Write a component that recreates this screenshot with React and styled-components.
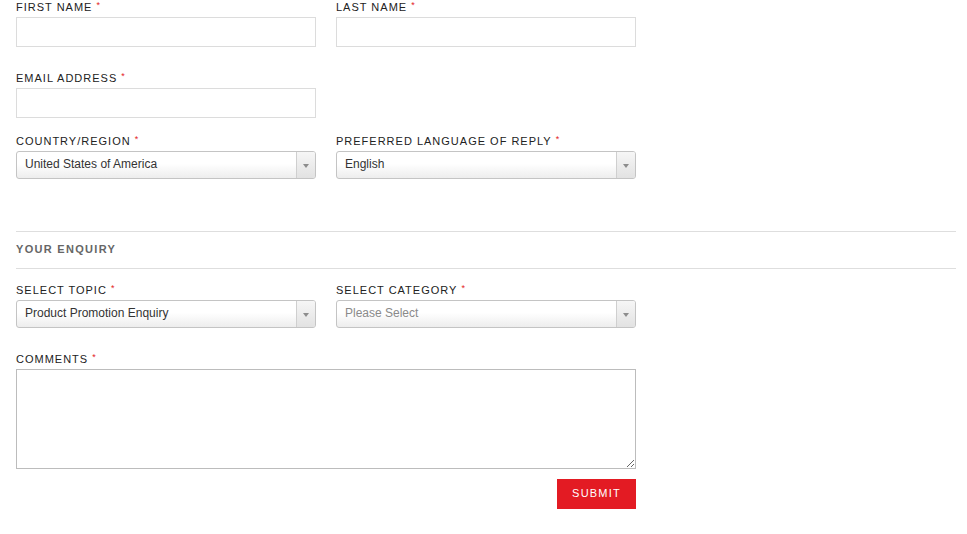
import React from "react";
import styled, { createGlobalStyle } from "styled-components";

const GlobalStyle = createGlobalStyle`
  body {
    margin: 0;
    background: #fff;
    font-family: "Liberation Sans", Arial, sans-serif;
  }
`;

const Form = styled.form`
  width: 940px;
  padding-left: 16px;
`;

const Row = styled.div`
  display: grid;
  grid-template-columns: 300px 300px;
  column-gap: 20px;
  margin-bottom: ${props => props.gap || 0}px;
`;

const Field = styled.div`
  display: flex;
  flex-direction: column;
`;

const Label = styled.label`
  display: block;
  height: 14px;
  line-height: 14px;
  margin-bottom: 3px;
  font-size: 11px;
  letter-spacing: 1px;
  color: #222;
  text-transform: uppercase;
`;

const Required = styled.span`
  color: #e31b23;
  font-size: 9px;
  vertical-align: top;
  line-height: 10px;
  margin-left: 4px;
`;

const TextInput = styled.input`
  box-sizing: border-box;
  width: 100%;
  height: 30px;
  border: 1px solid #dcdcdc;
  margin: 0;
  padding: 0 8px;
  font-family: inherit;
  font-size: 12px;
  outline: none;
`;

const SelectBox = styled.div`
  box-sizing: border-box;
  display: flex;
  align-items: stretch;
  height: 28px;
  border: 1px solid #c4c4c4;
  border-radius: 3px;
  background: linear-gradient(#ffffff, #ffffff 45%, #ededed);
  overflow: hidden;
`;

const SelectValue = styled.span`
  flex: 1;
  display: flex;
  align-items: center;
  padding: 0 0 2px 8px;
  font-size: 12px;
  color: ${props => (props.placeholder ? "#8a8a8a" : "#333")};
`;

const SelectArrow = styled.span`
  width: 18px;
  border-left: 1px solid #cfcfcf;
  background: linear-gradient(#f6f6f6, #e2e2e2);
  display: flex;
  align-items: center;
  justify-content: center;
  &::after {
    content: "";
    border-left: 3px solid transparent;
    border-right: 3px solid transparent;
    border-top: 4px solid #8c8c8c;
    margin-top: 2px;
  }
`;

const Divider = styled.hr`
  margin: 0;
  border: 0;
  border-top: 1px solid #dedede;
`;

const SectionTitle = styled.h3`
  margin: 0;
  height: 36px;
  line-height: 34px;
  padding-bottom: 0;
  box-sizing: border-box;
  font-size: 11px;
  font-weight: bold;
  letter-spacing: 1.3px;
  color: #666;
`;

const Section = styled.div`
  margin-top: 52px;
  margin-bottom: 14px;
`;

const Comments = styled.textarea`
  box-sizing: border-box;
  display: block;
  width: 620px;
  height: 100px;
  margin: 0;
  border: 1px solid #bcbcbc;
  padding: 6px 8px;
  font-family: inherit;
  font-size: 12px;
  resize: both;
  outline: none;
`;

const Actions = styled.div`
  width: 620px;
  display: flex;
  justify-content: flex-end;
  margin-top: 10px;
`;

const SubmitButton = styled.button`
  width: 79px;
  height: 30px;
  border: 0;
  padding: 0 0 2px;
  background: #e31b23;
  color: #fff;
  font-family: inherit;
  font-size: 11px;
  letter-spacing: 1.2px;
  cursor: pointer;
`;

const FieldLabel = ({ children }) => (
  <Label>
    {children}
    <Required>*</Required>
  </Label>
);

const FakeSelect = ({ value, placeholder }) => (
  <SelectBox>
    <SelectValue placeholder={placeholder ? 1 : undefined}>{value}</SelectValue>
    <SelectArrow />
  </SelectBox>
);

export default function App() {
  return (
    <>
      <GlobalStyle />
      <Form onSubmit={e => e.preventDefault()}>
        <Row gap={24}>
          <Field>
            <FieldLabel>First Name</FieldLabel>
            <TextInput type="text" />
          </Field>
          <Field>
            <FieldLabel>Last Name</FieldLabel>
            <TextInput type="text" />
          </Field>
        </Row>
        <Row gap={16}>
          <Field>
            <FieldLabel>Email Address</FieldLabel>
            <TextInput type="email" />
          </Field>
        </Row>
        <Row>
          <Field>
            <FieldLabel>Country/Region</FieldLabel>
            <FakeSelect value="United States of America" />
          </Field>
          <Field>
            <FieldLabel>Preferred Language of Reply</FieldLabel>
            <FakeSelect value="English" />
          </Field>
        </Row>

        <Section>
          <Divider />
          <SectionTitle>YOUR ENQUIRY</SectionTitle>
          <Divider />
        </Section>

        <Row gap={24}>
          <Field>
            <FieldLabel>Select Topic</FieldLabel>
            <FakeSelect value="Product Promotion Enquiry" />
          </Field>
          <Field>
            <FieldLabel>Select Category</FieldLabel>
            <FakeSelect value="Please Select" placeholder />
          </Field>
        </Row>
        <Field>
          <FieldLabel>Comments</FieldLabel>
          <Comments />
        </Field>
        <Actions>
          <SubmitButton type="submit">SUBMIT</SubmitButton>
        </Actions>
      </Form>
    </>
  );
}
